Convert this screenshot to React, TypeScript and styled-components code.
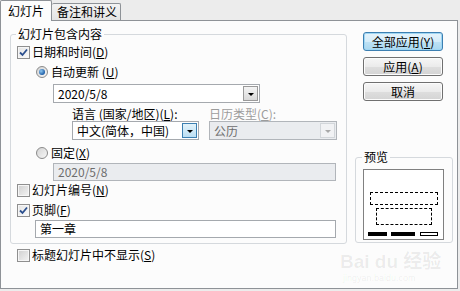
import React from 'react';
import styled, { createGlobalStyle } from 'styled-components';

const GlobalStyle = createGlobalStyle`
  html, body {
    margin: 0;
    padding: 0;
    background: #ececec;
  }
  body {
    font-family: "Noto Sans CJK SC", "Liberation Sans", sans-serif;
    font-size: 12px;
    line-height: 14px;
    color: #000;
  }
`;

const Window = styled.div`
  position: relative;
  width: 460px;
  height: 291px;
  background: #ececec;
  overflow: hidden;
`;

const TabStrip = styled.div`
  display: flex;
  align-items: flex-start;
  height: 20px;
  position: relative;
  z-index: 1;
`;

const Tab = styled.div<{ $active?: boolean }>`
  box-sizing: border-box;
  display: flex;
  align-items: center;
  height: ${p => (p.$active ? '21px' : '17px')};
  margin-top: ${p => (p.$active ? '0' : '3px')};
  padding: ${p => (p.$active ? '0 0 0 7px' : '0 0 0 5px')};
  width: ${p => (p.$active ? '52px' : '69px')};
  border: 1px solid #8e9297;
  border-bottom: none;
  border-left: ${p => (p.$active ? '1px solid #8e9297' : 'none')};
  border-radius: 2px 2px 0 0;
  background: ${p => (p.$active ? '#fcfcfc' : 'linear-gradient(#f3f3f3, #e3e3e3)')};
`;

const Panel = styled.div`
  box-sizing: border-box;
  display: flex;
  align-items: flex-start;
  width: 458px;
  height: 269px;
  border: 1px solid #8e9297;
  background: #fcfcfc;
`;

const LeftCol = styled.div`
  display: flex;
  flex-direction: column;
  padding: 13px 0 0 9px;
`;

const GroupBox = styled.div`
  position: relative;
  box-sizing: border-box;
  width: 337px;
  border: 1px solid #d5d9dd;
  border-radius: 3px;
  padding: 0 0 5px 0;
  display: flex;
  flex-direction: column;
`;

const Legend = styled.span<{ $left: number }>`
  position: absolute;
  top: -8px;
  left: ${p => p.$left}px;
  padding: 0 2px;
  background: #fcfcfc;
  line-height: 14px;
`;

const Row = styled.div<{ $mt: number; $indent: number; $gap?: number }>`
  display: flex;
  align-items: center;
  height: 16px;
  margin-top: ${p => p.$mt}px;
  padding-left: ${p => p.$indent}px;
  gap: ${p => p.$gap ?? 2}px;
  white-space: nowrap;
`;

const Check = styled.span<{ $checked?: boolean }>`
  box-sizing: border-box;
  display: inline-flex;
  align-items: center;
  justify-content: center;
  width: 13px;
  height: 13px;
  border: 1px solid #8f8f8f;
  background: ${p => (p.$checked ? 'linear-gradient(135deg, #e4e4e4, #fbfbfb)' : 'linear-gradient(135deg, #cfcfcf, #f4f4f4)')};
  box-shadow: inset 0 0 0 1px #f6f6f6;
`;

const Radio = styled.span<{ $checked?: boolean }>`
  box-sizing: border-box;
  display: inline-flex;
  align-items: center;
  justify-content: center;
  width: 12px;
  height: 12px;
  border-radius: 50%;
  border: 1px solid #8a8a8a;
  background: linear-gradient(135deg, #d4d4d4, #f7f7f7);
  margin-right: 1px;

  &::after {
    content: '';
    display: ${p => (p.$checked ? 'block' : 'none')};
    width: 6px;
    height: 6px;
    border-radius: 50%;
    background: radial-gradient(circle at 35% 35%, #8fc7f0, #1d5ea8 70%);
  }
`;

const Field = styled.div<{ $mt: number; $left: number; $width: number; $disabled?: boolean; $h?: number }>`
  box-sizing: border-box;
  display: flex;
  align-items: center;
  height: ${p => p.$h ?? 18}px;
  width: ${p => p.$width}px;
  margin-top: ${p => p.$mt}px;
  margin-left: ${p => p.$left}px;
  padding-left: 4px;
  border: 1px solid ${p => (p.$disabled ? '#b1b5ba' : '#a5a9ae')};
  background: ${p => (p.$disabled ? '#eaecef' : '#ffffff')};
  color: ${p => (p.$disabled ? '#6d6d6d' : '#000')};
  white-space: nowrap;
`;

const Combo = styled(Field)`
  padding-right: 1px;
  justify-content: space-between;
`;

const DropButton = styled.span<{ $tone: 'plain' | 'hot' | 'off' }>`
  box-sizing: border-box;
  display: inline-flex;
  align-items: center;
  justify-content: center;
  width: 15px;
  height: 15px;
  border: 1px solid ${p => (p.$tone === 'hot' ? '#3c7fb1' : p.$tone === 'off' ? '#d2d6da' : '#9a9a9a')};
  background: ${p =>
    p.$tone === 'hot'
      ? 'linear-gradient(#e3f3fb, #bcdff3)'
      : p.$tone === 'off'
      ? '#f1f2f4'
      : 'linear-gradient(#f4f4f4, #d9d9d9)'};

  &::after {
    content: '';
    border-left: 3px solid transparent;
    border-right: 3px solid transparent;
    border-top: 3px solid ${p => (p.$tone === 'off' ? '#a8a8a8' : '#000')};
    margin-top: 1px;
  }
`;

const LabelRow = styled.div`
  display: flex;
  height: 13px;
  margin-top: 4px;
  padding-left: 61px;
  line-height: 13px;
  white-space: nowrap;
`;

const Caption = styled.span<{ $width?: number; $disabled?: boolean }>`
  width: ${p => (p.$width ? `${p.$width}px` : 'auto')};
  color: ${p => (p.$disabled ? '#9c9c9c' : '#000')};
`;

const ComboRow = styled.div`
  display: flex;
  gap: 10px;
  margin-top: 1px;
  padding-left: 61px;
`;

const RightCol = styled.div`
  display: flex;
  flex-direction: column;
  width: 98px;
  margin-left: 8px;
  padding-top: 11px;
`;

const ButtonStack = styled.div`
  display: flex;
  flex-direction: column;
  gap: 6px;
  padding-left: 8px;
`;

const Button = styled.button<{ $focused?: boolean }>`
  box-sizing: border-box;
  width: 80px;
  height: 19px;
  padding: 0;
  font: inherit;
  line-height: 14px;
  color: #000;
  border-radius: 3px;
  border: 1px solid ${p => (p.$focused ? '#3c7fb1' : '#707070')};
  background: ${p =>
    p.$focused ? 'linear-gradient(#e5f3fb 0%, #d4ecf9 50%, #bee1f4 51%, #a9d7f0 100%)' : 'linear-gradient(#f6f6f6 0%, #ebebeb 50%, #dedede 51%, #d4d4d4 100%)'};
  box-shadow: inset 0 0 0 1px ${p => (p.$focused ? '#9fd6f3' : '#fcfcfc')};
`;

const PreviewBox = styled.div`
  position: relative;
  box-sizing: border-box;
  width: 98px;
  height: 86px;
  margin-top: 56px;
  border: 1px solid #d5d9dd;
  border-radius: 3px;
  padding: 11px 0 0 7px;
`;

const Page = styled.div`
  box-sizing: border-box;
  width: 81px;
  height: 71px;
  border: 1px solid #808080;
  background: #fff;
  display: flex;
  flex-direction: column;
  align-items: flex-start;
`;

const Placeholder = styled.div<{ $mt: number; $left: number; $w: number; $h: number }>`
  box-sizing: border-box;
  margin-top: ${p => p.$mt}px;
  margin-left: ${p => p.$left}px;
  width: ${p => p.$w}px;
  height: ${p => p.$h}px;
  border: 1px dashed #000;
`;

const Bars = styled.div`
  display: flex;
  gap: 4px;
  margin-top: 7px;
  padding-left: 4px;
`;

const Bar = styled.span<{ $w: number; $hollow?: boolean }>`
  box-sizing: border-box;
  width: ${p => p.$w}px;
  height: 4px;
  background: ${p => (p.$hollow ? '#fff' : '#000')};
  border: 1px solid #000;
  margin-left: ${p => (p.$hollow ? 1 : 0)}px;
`;

const Watermark = styled.div`
  position: absolute;
  left: 340px;
  top: 252px;
  color: rgba(0, 0, 0, 0.07);
  font-family: "Liberation Sans", "Noto Sans CJK SC", sans-serif;
  font-weight: bold;
  font-size: 19px;
  line-height: 20px;
  pointer-events: none;

  small {
    display: block;
    font-size: 9px;
    line-height: 12px;
    font-weight: normal;
    margin-left: 3px;
  }
`;

const CheckMark = () => (
  <svg width="9" height="9" viewBox="0 0 9 9">
    <path d="M1 4.5 L3.5 7 L8 1.5" fill="none" stroke="#2b4f8e" strokeWidth="1.8" />
  </svg>
);

const App: React.FC = () => {
  return (
    <>
      <GlobalStyle />
      <Window>
        <TabStrip>
          <Tab $active>幻灯片</Tab>
          <Tab>备注和讲义</Tab>
        </TabStrip>
        <Panel>
          <LeftCol>
            <GroupBox>
              <Legend $left={5}>幻灯片包含内容</Legend>
              <Row $mt={9} $indent={6}>
                <Check $checked><CheckMark /></Check>
                <span>日期和时间(<u>D</u>)</span>
              </Row>
              <Row $mt={4} $indent={25}>
                <Radio $checked />
                <span>自动更新 (<u>U</u>)</span>
              </Row>
              <Combo $mt={4} $left={42} $width={207} $h={19}>
                <span>2020/5/8</span>
                <DropButton $tone="plain" />
              </Combo>
              <LabelRow>
                <Caption $width={137}>语言 (国家/地区)(<u>L</u>):</Caption>
                <Caption $disabled>日历类型(<u>C</u>):</Caption>
              </LabelRow>
              <ComboRow>
                <Combo $mt={0} $left={0} $width={127} $h={19}>
                  <span>中文(简体，中国)</span>
                  <DropButton $tone="hot" />
                </Combo>
                <Combo $mt={0} $left={0} $width={128} $h={19} $disabled>
                  <span>公历</span>
                  <DropButton $tone="off" />
                </Combo>
              </ComboRow>
              <Row $mt={5} $indent={25}>
                <Radio />
                <span>固定(<u>X</u>)</span>
              </Row>
              <Field $mt={2} $left={42} $width={283} $disabled>
                2020/5/8
              </Field>
              <Row $mt={1} $indent={6}>
                <Check />
                <span>幻灯片编号(<u>N</u>)</span>
              </Row>
              <Row $mt={4} $indent={6}>
                <Check $checked><CheckMark /></Check>
                <span>页脚(<u>F</u>)</span>
              </Row>
              <Field $mt={2} $left={24} $width={301}>
                第一章
              </Field>
            </GroupBox>
            <Row $mt={3} $indent={7}>
              <Check />
              <span>标题幻灯片中不显示(<u>S</u>)</span>
            </Row>
          </LeftCol>
          <RightCol>
            <ButtonStack>
              <Button $focused>全部应用(<u>Y</u>)</Button>
              <Button>应用(<u>A</u>)</Button>
              <Button>取消</Button>
            </ButtonStack>
            <PreviewBox>
              <Legend $left={6}>预览</Legend>
              <Page>
                <Placeholder $mt={22} $left={6} $w={68} $h={13} />
                <Placeholder $mt={3} $left={12} $w={56} $h={17} />
                <Bars>
                  <Bar $w={19} />
                  <Bar $w={24} />
                  <Bar $w={18} $hollow />
                </Bars>
              </Page>
            </PreviewBox>
          </RightCol>
        </Panel>
        <Watermark>
          Bai du 经验
          <small>jingyan.baidu.com</small>
        </Watermark>
      </Window>
    </>
  );
};

export default App;
